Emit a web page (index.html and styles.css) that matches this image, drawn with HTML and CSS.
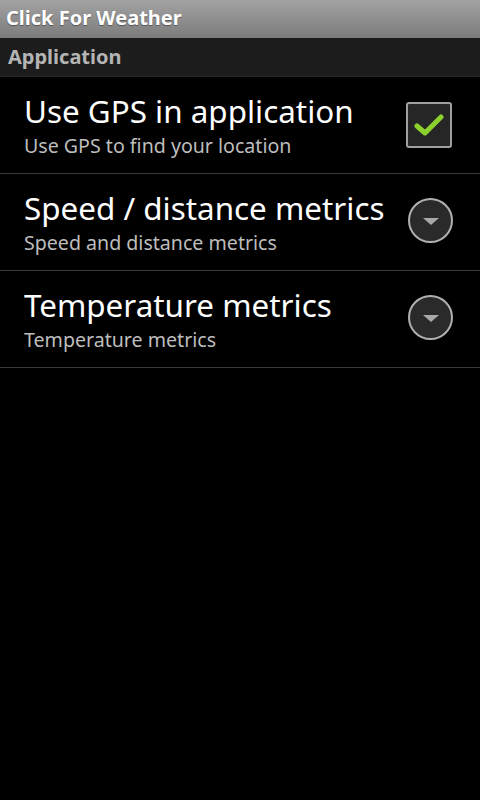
FILE: index.html
```html
<!DOCTYPE html>
<html lang="en">
<head>
  <meta charset="utf-8">
  <title>Click For Weather</title>
  <link rel="stylesheet" href="styles.css">
</head>
<body>
  <div class="titlebar">Click For Weather</div>
  <div class="category">Application</div>

  <ul class="prefs">
    <li class="pref">
      <div class="pref-text">
        <div class="pref-title">Use GPS in application</div>
        <div class="pref-summary">Use GPS to find your location</div>
      </div>
      <span class="checkbox">
        <svg width="30" height="24" viewBox="0 0 30 24">
          <path d="M3 13 L11 20 L27 4" fill="none" stroke="#8cd12c" stroke-width="5" stroke-linecap="round" stroke-linejoin="round"/>
        </svg>
      </span>
    </li>
    <li class="pref">
      <div class="pref-text">
        <div class="pref-title">Speed / distance metrics</div>
        <div class="pref-summary">Speed and distance metrics</div>
      </div>
      <span class="dropdown"></span>
    </li>
    <li class="pref">
      <div class="pref-text">
        <div class="pref-title">Temperature metrics</div>
        <div class="pref-summary">Temperature metrics</div>
      </div>
      <span class="dropdown"></span>
    </li>
  </ul>
</body>
</html>
```

FILE: styles.css
```css
body {
  margin: 0;
  background: #000;
  font-family: "Noto Sans", "Open Sans", sans-serif;
  width: 480px;
  height: 800px;
  overflow: hidden;
}

/* 상단 타이틀바 */
.titlebar {
  height: 38px;
  line-height: 36px;
  padding-left: 6px;
  background: linear-gradient(#a2a2a2, #7c7c7c);
  color: #fff;
  font-size: 20px;
  font-weight: bold;
  text-shadow: 0 1px 1px rgba(0,0,0,0.4);
}

/* 카테고리 헤더 */
.category {
  height: 38px;
  line-height: 37px;
  padding-left: 8px;
  background: #1c1c1c;
  color: #b4b4b4;
  font-size: 20px;
  font-weight: bold;
  border-bottom: 1px solid #262626;
}

.prefs {
  list-style: none;
  margin: 0;
  padding: 0;
}

.pref {
  display: flex;
  align-items: center;
  height: 96px;
  padding: 0 27px 0 24px;
  border-bottom: 1px solid #3a3a3a;
}

.pref-text {
  flex: 1;
  margin-top: -1px;
}

.pref-title {
  color: #fff;
  font-size: 31.4px;
  line-height: 40px;
}

.pref-summary {
  color: #bdbdbd;
  font-size: 19.6px;
  line-height: 26px;
  margin-top: 2px;
}

.checkbox {
  width: 42px;
  height: 42px;
  border: 2px solid #a0a0a0;
  border-radius: 3px;
  background: #262626;
  display: flex;
  align-items: center;
  justify-content: center;
  margin-right: 1px;
}

.dropdown {
  position: relative;
  width: 41px;
  height: 41px;
  border: 2px solid #b0b0b0;
  border-radius: 50%;
  background: #2a2a2a;
  margin-top: -3px;
}
.dropdown:after {
  content: "";
  position: absolute;
  left: 13px;
  top: 18px;
  border-left: 8px solid transparent;
  border-right: 8px solid transparent;
  border-top: 7px solid #a8a8a8;
}
```
